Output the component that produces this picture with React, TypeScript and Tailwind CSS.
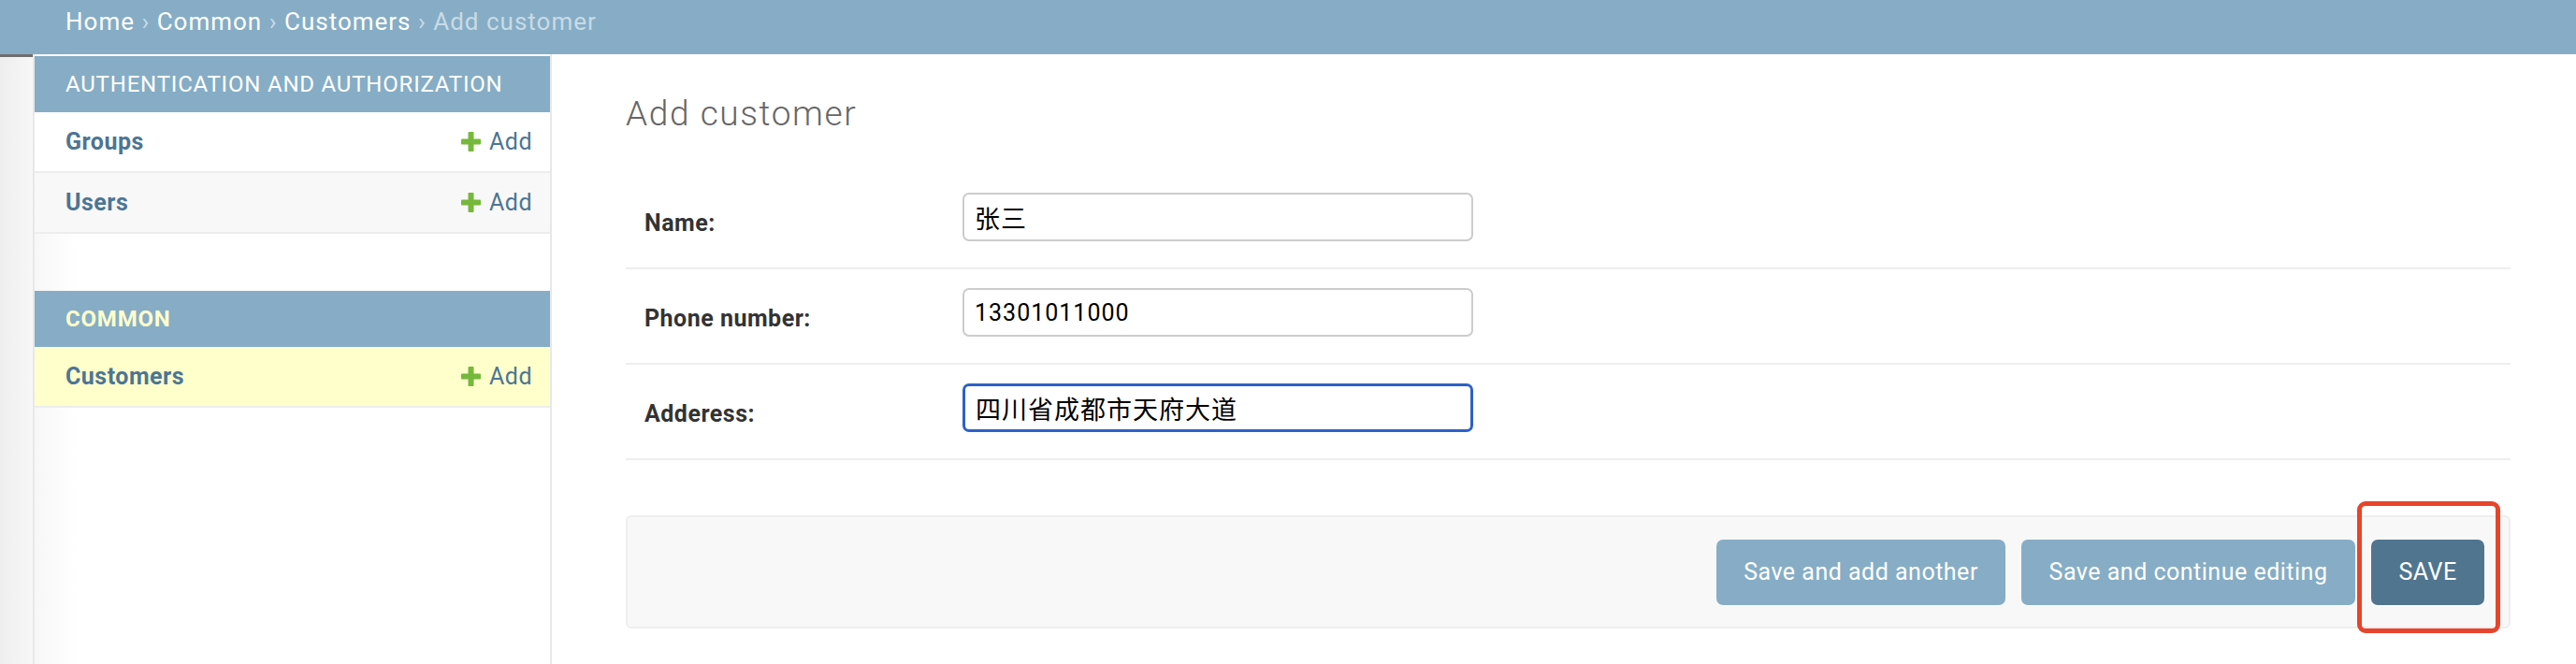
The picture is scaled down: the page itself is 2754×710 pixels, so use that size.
const font = { fontFamily: 'Roboto, "Noto Sans CJK SC", sans-serif' };

type Model = { name: string; current?: boolean };

const apps: { title: string; current?: boolean; models: Model[] }[] = [
  { title: "Authentication and Authorization", models: [{ name: "Groups" }, { name: "Users" }] },
  { title: "Common", current: true, models: [{ name: "Customers", current: true }] },
];

const PlusIcon = () => (
  <svg width="21" height="21" viewBox="0 0 21 21" className="shrink-0">
    <rect x="7.5" y="0" width="6" height="21" rx="1" fill="#76b83b" />
    <rect x="0" y="7.5" width="21" height="6" rx="1" fill="#76b83b" />
  </svg>
);

const Sidebar = () => (
  <div className="w-[555px] shrink-0 border-x-2 border-[#e8e8e8] bg-[linear-gradient(to_right,#f7f7f7,#ffffff_45px)] pt-[2px]">
    {apps.map((app, i) => (
      <div key={app.title} className={i === 0 ? "mb-[61px]" : ""}>
        <div
          className={`h-[60px] flex items-center pl-[33px] bg-[#86adc5] text-[24px] uppercase tracking-[0.8px] ${
            app.current ? "text-[#ffffcc] font-bold" : "text-white"
          }`}
        >
          {app.title}
        </div>
        {app.models.map((m, j) => (
          <div
            key={m.name}
            className={`h-[65px] flex items-center justify-between pl-[33px] pr-[19px] border-b-2 border-[#ededed] text-[25px] tracking-[0.5px] ${
              m.current ? "bg-[#ffffcc]" : j % 2 === 1 ? "bg-[#f8f8f8]" : "bg-white"
            }`}
          >
            <span className="font-bold text-[#4d7593]">{m.name}</span>
            <span className="flex items-center gap-[9px] text-[#4d7593]">
              <PlusIcon />
              Add
            </span>
          </div>
        ))}
      </div>
    ))}
  </div>
);

const fields = [
  { label: "Name:", value: "张三", cjk: true },
  { label: "Phone number:", value: "13301011000" },
  { label: "Adderess:", value: "四川省成都市天府大道", cjk: true, focused: true },
];

export default function App() {
  return (
    <div className="w-[2754px] h-[710px] overflow-hidden bg-white flex flex-col" style={font}>
      <div className="h-[58px] shrink-0 bg-[#86adc5] pl-[70px] pt-[9px] text-[26px] leading-[29px] tracking-[1px] text-[#c8dbe7]">
        <span className="text-white">Home</span> › <span className="text-white">Common</span> ›{" "}
        <span className="text-white">Customers</span> › Add customer
      </div>

      <div className="flex flex-1 min-h-0">
        <div className="w-[35px] shrink-0 border-t-[3px] border-[#6f6f6f] bg-gradient-to-r from-[#eeeeee] to-[#f7f7f7]" />
        <Sidebar />

        <div className="flex-1 pl-[79px] pr-[70px] pt-[43px]">
          <h1 className="text-[37px] leading-[42px] font-light tracking-[1.6px] text-[#666666]">Add customer</h1>

          <div className="mt-[43px]">
            {fields.map((f) => (
              <div key={f.label} className="flex items-start pl-[20px] pt-[20px] pb-[28px] border-b-2 border-[#eeeeee]">
                <label className="w-[340px] shrink-0 mt-[18px] text-[25px] leading-[29px] tracking-[0.5px] font-bold text-[#333333]">
                  {f.label}
                </label>
                <input
                  readOnly
                  value={f.value}
                  className={`w-[546px] h-[52px] rounded-[7px] px-[11px] text-black bg-white outline-none ${
                    f.cjk ? "text-[27px] tracking-[1px]" : "text-[25px] tracking-[1px]"
                  } ${f.focused ? "border-[3px] border-[#2c62c8]" : "border-2 border-[#cccccc]"}`}
                  style={font}
                />
              </div>
            ))}
          </div>

          <div className="mt-[59px] h-[121px] flex items-center justify-end gap-[17px] pr-[26px] bg-[#f8f8f8] border-2 border-[#eeeeee] rounded-[6px] text-[25px] tracking-[0.5px] text-white">
            <button className="w-[309px] h-[70px] rounded-[7px] bg-[#86adc5]">Save and add another</button>
            <button className="w-[357px] h-[70px] rounded-[7px] bg-[#86adc5]">Save and continue editing</button>
            <div className="relative">
              <button className="w-[121px] h-[70px] rounded-[7px] bg-[#50758f]">SAVE</button>
              <div className="absolute -left-[15px] -top-[41px] w-[153px] h-[141px] border-[5px] border-[#e7442b] rounded-[9px]" />
            </div>
          </div>
        </div>
      </div>
    </div>
  );
}
